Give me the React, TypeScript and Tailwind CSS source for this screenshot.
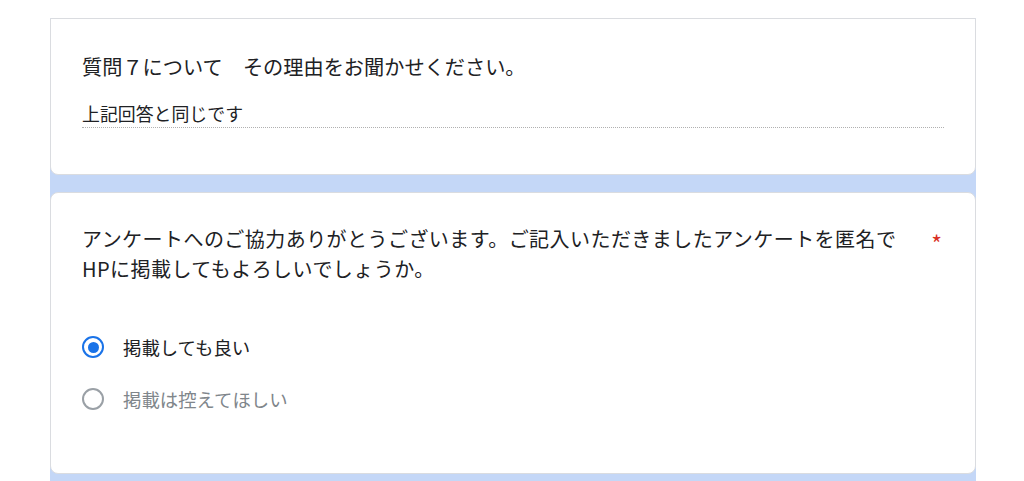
import React from "react";

const font = { fontFamily: '"Noto Sans CJK JP", "Noto Sans", sans-serif' };

function Radio({ checked, label }: { checked: boolean; label: string }) {
  return (
    <div className="flex h-[40px] items-center">
      <div
        className={
          checked
            ? "flex h-[22px] w-[22px] items-center justify-center rounded-full border-[2.5px] border-[#1a73e8]"
            : "flex h-[22px] w-[22px] items-center justify-center rounded-full border-[2px] border-[#9aa0a6]"
        }
      >
        {checked && <div className="h-[11px] w-[11px] rounded-full bg-[#1a73e8]" />}
      </div>
      <span
        className={
          checked
            ? "ml-[19px] text-[18.4px] leading-[28px] text-[#202124]"
            : "ml-[19px] text-[18.4px] leading-[28px] text-[#80868b]"
        }
      >
        {label}
      </span>
    </div>
  );
}

export default function App() {
  return (
    <div className="min-h-[481px] w-[1024px] bg-white pt-[18px]" style={font}>
      <div className="ml-[50px] flex w-[926px] flex-col gap-[17px] bg-[#c4d7f7] pb-[9px]">
        <div className="rounded-b-[8px] border border-[#dadce0] bg-white px-[31px] pb-[46px] pt-[33px]">
          <div className="text-[20.2px] leading-[30px] text-[#202124]">
            質問７について　その理由をお聞かせください。
          </div>
          <div className="mt-[17px] border-b border-dotted border-[#b0b0b0] text-[17.9px] leading-[28px] text-[#202124]">
            上記回答と同じです
          </div>
        </div>
        <div className="rounded-[8px] border border-[#dadce0] bg-white px-[31px] pb-[54px] pt-[31px]">
          <div className="flex">
            <div className="w-[830px] text-[20px] leading-[30px] tracking-[0.45px] text-[#202124]">
              アンケートへのご協力ありがとうございます。ご記入いただきましたアンケートを匿名でHPに掲載してもよろしいでしょうか。
            </div>
            <div className="flex-1 pr-[2px] pt-[3px] text-right text-[23px] leading-[32px] text-[#d93025]">*</div>
          </div>
          <div className="mt-[43px] flex flex-col gap-[12px]">
            <Radio checked label="掲載しても良い" />
            <Radio checked={false} label="掲載は控えてほしい" />
          </div>
        </div>
      </div>
    </div>
  );
}
